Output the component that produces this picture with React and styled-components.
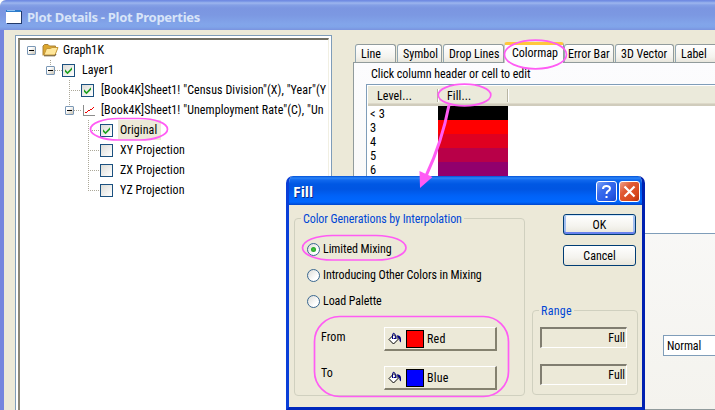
import React from "react";
import styled, { createGlobalStyle, css } from "styled-components";

const Global = createGlobalStyle`
  * { box-sizing: border-box; }
  html, body { margin: 0; padding: 0; overflow: hidden; }
  body {
    font-family: Roboto, sans-serif; font-stretch: condensed;
    font-size: 12px; line-height: 14px; letter-spacing: -0.08px; color: #000;
  }
  svg { flex: none; }
`;

const Screen = styled.div`
  position: relative; width: 715px; height: 410px; overflow: hidden; background: #fff;
`;
const Window = styled.div`
  display: flex; flex-direction: column; height: 410px; isolation: isolate;
  background: #ece9d8; border-top-left-radius: 6px; overflow: hidden;
`;
const TitleBar = styled.header`
  display: flex; flex: none; align-items: center; gap: 5px; height: 30px; padding: 3px 0 0 6px;
  background: linear-gradient(#7087e0 0, #7290e4 1px, #9db6ee 3px, #84a0e6 5px, #7b96e1 8px, #7c98e2 15px, #82a5ea 24px, #80a4e9 27px, #7a93df 30px);
`;
const Title = styled.h1`
  margin: 0; font: bold 13px/16px "Noto Sans", sans-serif; letter-spacing: -0.28px;
  white-space: pre; color: #d8e4f8;
`;
const Body = styled.div`
  display: flex; flex: 1; min-height: 0; padding-left: 11px;
  border-left: 4px solid #7585de;
`;
const TreePane = styled.section`
  flex: none; width: 317px; height: 390px; margin-top: 5px; padding: 2px;
  border: 1px solid #7f9db9; background: #fff;
`;
const Tree = styled.div`
  height: 100%; overflow: hidden; background: #fff; position: relative;
  border: solid; border-width: 2px 1px 0 2px; border-color: #716f64 #f1efe2 #fff #8a877a;
`;
const TreeRow = styled.div`
  display: flex; align-items: center; height: 20px; white-space: nowrap;
  padding-left: ${(p) => p.$indent}px;
`;
const TreeLabel = styled.span`
  margin-left: ${(p) => p.$gap ?? 5}px; padding: 0 ${(p) => (p.$selected ? 4 : 2)}px 0 2px;
  line-height: 20px; letter-spacing: 0.08px;
  background: ${(p) => (p.$selected ? "#ece9d8" : "transparent")};
`;
const Expander = styled.span`
  display: grid; place-items: center; flex: none; width: 9px; height: 9px;
  border: 1px solid #7b98b6; border-radius: 1px;
  background: linear-gradient(135deg, #fff 30%, #c8c2b2);
  &::after { content: ""; width: 5px; height: 1px; background: #000; }
`;
const Dots = styled.span`
  flex: none; width: ${(p) => p.$w}px; height: 1px;
  background: repeating-linear-gradient(90deg, #aca899 0 1px, transparent 1px 2px);
`;
const Spacer = styled.span`
  flex: none; width: 6px;
`;
const Branches = styled.svg`
  position: absolute; inset: 0; pointer-events: none;
`;
const Box = styled.span`
  display: grid; place-items: center; flex: none; width: 13px; height: 13px;
  border: 1px solid #1c5180; background: linear-gradient(135deg, #dcdcd7, #fff);
`;
const TabArea = styled.section`
  display: flex; flex-direction: column; width: 400px; flex: none; margin: 12px 0 0 21px;
`;
const Tabs = styled.nav`
  display: flex; align-items: flex-end; height: 20px; padding-left: 2px; flex: none; z-index: 1;
`;
const Tab = styled.button`
  flex: none; width: ${(p) => p.$w}px; height: 18px; margin: 0 ${(p) => p.$gap ?? 2}px 0 0;
  padding: 1px 0 0 ${(p) => p.$pad ?? 5}px; text-align: left; white-space: nowrap;
  font: inherit; font-stretch: condensed; letter-spacing: 0; color: #000;
  border: 1px solid #919b9c; border-left-color: #91a7b4; border-bottom: 0;
  border-radius: 3px 3px 0 0; background: linear-gradient(#fff, #f4f3ee 70%, #e8e6dc);
  ${(p) => p.$active && css`
    height: 21px; margin-bottom: -1px; padding-top: 0; padding-bottom: 3px; background: #fcfcfe;
    border-top: 3px solid #ffc73c; border-left-color: #c9cbc6;
  `}
`;
const Page = styled.div`
  flex: 1; padding: 4px 0 0 12px; border: 1px solid #919b9c;
  background: linear-gradient(#fcfcfe, #f4f3ee);
`;
const Hint = styled.p`
  margin: 0 0 3px 5px; height: 14px; letter-spacing: -0.04px;
`;
const List = styled.div`
  height: 150px; border: 1px solid #7f9db9; background: #fff; padding: 1px;
`;
const ListHead = styled.div`
  display: flex; height: 20px; padding-top: 3px; background: #ebeadb;
  border-bottom: 2px solid #d0ccbc; box-shadow: inset 0 -1px #ddd9c9;
`;
const HeadCell = styled.div`
  width: ${(p) => p.$w}px; height: 13px; padding-left: 9px; letter-spacing: 0.1px;
  border-right: 1px solid #b8b5a3; box-shadow: 1px 0 #fff;
`;
const Level = styled.div`
  display: flex; height: 14px; padding-left: 2px;
`;
const LevelName = styled.span`
  width: 68px; line-height: 15px; font-size: 12.5px; letter-spacing: 0.2px;
`;
const Swatch = styled.span`
  width: 70px; height: 14px; background: ${(p) => p.$color};
`;
const Combo = styled.div`
  width: 100px; height: 21px; margin: 101px 0 0 297px; padding: 3px 3px;
  border: 1px solid #7f9db9; background: #fff;
`;

const Dialog = styled.section`
  position: absolute; left: 286px; top: 176px; width: 359px; height: 234px;
  display: flex; flex-direction: column; overflow: hidden;
  border: solid #0a3fd8; border-width: 0 3px 3px; border-right-color: #0020b0; border-bottom-color: #0028bc;
  border-radius: 7px 7px 0 0; background: #ece9d8;
`;
const DialogBar = styled.header`
  display: flex; align-items: center; height: 29px; flex: none; gap: 2px; padding: 0 2px 0 4px;
  background: linear-gradient(#0050d8 0, #2b84f6 2px, #1068ee 4px, #0058e4 8px, #0055e2 13px, #0062f8 20px, #0068ff 26px, #0046cc 29px);
`;
const DialogTitle = styled.h2`
  flex: 1; margin: 2px 0 0; font: bold 14px/17px "Noto Sans", sans-serif; letter-spacing: 0;
  color: #fff; text-shadow: 1px 1px #0a2a8a;
`;
const CaptionButton = styled.button`
  display: grid; place-items: center; width: 21px; height: 21px; padding: 0; margin-top: 1px;
  border: 1px solid #fff; border-radius: 3px; color: #fff;
  background: ${(p) => p.$close
    ? "linear-gradient(135deg, #f0a088, #e05a34 35%, #d8481c 75%, #b8300c)"
    : "linear-gradient(135deg, #7ea4f8, #3a6cec 35%, #2a5ce8 70%, #1a44c8)"};
`;
const DialogBody = styled.div`
  display: flex; flex: 1; padding: 6px 5px 0;
`;
const GroupBox = styled.div`
  display: flow-root; width: ${(p) => p.$w}px; height: ${(p) => p.$h}px; flex: none;
  margin-top: ${(p) => p.$top ?? 0}px;
`;
const GroupFrame = styled.div`
  height: calc(100% - 7px); margin-top: 7px; padding: ${(p) => p.$pad};
  border: 1px solid #d0d0bf; border-radius: 4px;
`;
const GroupTitle = styled.div`
  width: max-content; height: 14px; margin: -7px 0 ${(p) => p.$after}px ${(p) => p.$x ?? 6}px; padding: 0 2px;
  background: #ece9d8; color: #0046d5; letter-spacing: ${(p) => p.$ls ?? -0.08}px;
`;
const Radio = styled.label`
  display: flex; align-items: center; gap: 3px; height: 26px; margin-left: 12px;
  white-space: nowrap;
`;
const RadioDot = styled.span`
  display: grid; place-items: center; width: 13px; height: 13px; flex: none;
  border: 1px solid #3a6890; border-radius: 50%;
  background: linear-gradient(135deg, #dcdcd7, #fff 70%);
  &::after {
    content: ""; width: 5px; height: 5px; border-radius: 50%;
    background: ${(p) => (p.$on ? "radial-gradient(#40c840, #189018)" : "transparent")};
  }
`;
const ColorRow = styled.div`
  display: flex; height: 24px; margin: ${(p) => p.$top}px 0 0 26px;
`;
const ColorName = styled.span`
  width: 63px; padding-top: ${(p) => p.$top}px; letter-spacing: 0.1px;
`;
const ColorButton = styled.button`
  display: flex; align-items: center; width: 113px; height: 24px; padding: 0 0 0 3px;
  font: inherit; font-stretch: condensed; letter-spacing: 0.2px; color: #000; background: #ece9d8;
  border: solid; border-width: 1px 2px 2px 1px; border-color: #fff #84816f #84816f #fff;
`;
const Chip = styled.span`
  width: 18px; height: 18px; margin: 0 3px 0 4px; flex: none;
  border: 1px solid #000; background: ${(p) => p.$color};
`;
const Side = styled.div`
  display: flex; flex-direction: column; width: 107px; margin-left: 7px; padding-top: 3px;
`;
const PushButton = styled.button`
  width: 73px; height: 21px; margin: 0 0 10px 31px; padding: 0; font: inherit; font-stretch: condensed;
  flex: none; color: #000; border: 1px solid #003c74; border-radius: 3px;
  background: linear-gradient(#fff, #f4f3ee 60%, #e8e5da);
  ${(p) => p.$default && css`
    box-shadow: inset 0 1px #cee7ff, inset 0 -2px #6982ee, inset 2px 0 #a3bff0, inset -2px 0 #a3bff0;
  `}
`;
const Field = styled.div`
  width: 87px; height: 21px; margin-bottom: 16px; padding: 2px 1px 0; text-align: right;
  border: solid; border-width: 2px 1px 1px 2px; border-color: #807d70 #fff #fff #807d70;
`;
const Marks = styled.svg`
  position: absolute; inset: 0; pointer-events: none;
`;

const Tick = () => (
  <svg width="9" height="9" viewBox="0 0 9 9">
    <path d="M1 3.2L3.5 6L8 1.3V3.8L3.5 8.3L1 5.8Z" fill="#21a121" />
  </svg>
);
const Check = ({ on }) => <Box>{on && <Tick />}</Box>;
const Folder = () => (
  <svg width="17" height="14" viewBox="0 0 17 14">
    <path d="M1 12.5V3L2.5 1.5H6L7.5 3H13.5V6" fill="#dda72e" stroke="#a88238" />
    <path d="M2 12L4.5 5.5H8.5L10 4.5H16L13 12Z" fill="#ffe79b" stroke="#c49738" />
    <path d="M2 12.8H13L14 11" fill="none" stroke="#66502a" />
  </svg>
);
const Plot = () => (
  <svg width="13" height="13" viewBox="0 0 13 13" shapeRendering="crispEdges">
    <path d="M1.5 1V11.5H13" fill="none" stroke="#8c8c8c" />
    <path d="M3 8.5H5M5 7.5H6M6 6.5H8M8 5.5H10M10 4.5H11M11 3.5H12" stroke="#f00000" />
  </svg>
);
const AppIcon = () => (
  <svg width="16" height="14" viewBox="0 0 16 14" shapeRendering="crispEdges">
    <path d="M0 0H15V13H0Z" fill="#fff" />
    <path d="M0 0H15V2H0Z" fill="#2e7ccc" />
    <path d="M1 0H9V1H1Z" fill="#8cc0f4" />
    <path d="M15.5 1V13M1 13.5H16" stroke="#223a6a" fill="none" />
  </svg>
);
const Bucket = () => (
  <svg width="14" height="14" viewBox="0 0 14 14">
    <path d="M1 7.5L6 2.5L10.5 7L5.5 12Z" fill="#fff" stroke="#000" />
    <path d="M4.5 7V2.5Q5 1 6 1.2Q7.5 1.5 7.5 6.5" fill="none" stroke="#000080" />
    <path d="M5.5 6.5H8.5" stroke="#000080" />
    <path d="M8.5 3.2Q13 3.5 13 7V10.5L11.5 9V7.5L9.5 5Z" fill="#000080" />
  </svg>
);

const levels = [["< 3", "#000"], ["3", "#f00"], ["4", "#df0020"], ["5", "#b80048"], ["6", "#91006d"]];

export default function App() {
  return (
    <Screen>
      <Global />
      <Window>
        <TitleBar><AppIcon /><Title>Plot Details - Plot Properties</Title></TitleBar>
        <Body>
          <TreePane>
            <Tree>
              <Branches width="307" height="200" shapeRendering="crispEdges">
                <g stroke="#aca899" strokeDasharray="1 1">
                  <path d="M30.5 20V26M49.5 40V66M68.5 80V151" />
                </g>
              </Branches>
              <TreeRow $indent={7}><Expander /><Spacer /><Folder /><TreeLabel $gap={2}>Graph1K</TreeLabel></TreeRow>
              <TreeRow $indent={26}><Expander /><Dots $w={7} /><Check on /><TreeLabel>Layer1</TreeLabel></TreeRow>
              <TreeRow $indent={51}><Dots $w={10} /><Check on /><TreeLabel>[Book4K]Sheet1! "Census Division"(X), "Year"(Y</TreeLabel></TreeRow>
              <TreeRow $indent={45}><Expander /><Dots $w={8} /><Plot /><TreeLabel $gap={4}>[Book4K]Sheet1! "Unemployment Rate"(C), "Un</TreeLabel></TreeRow>
              <TreeRow $indent={70}><Dots $w={10} /><Check on /><TreeLabel $selected>Original</TreeLabel></TreeRow>
              <TreeRow $indent={70}><Dots $w={10} /><Check /><TreeLabel>XY Projection</TreeLabel></TreeRow>
              <TreeRow $indent={70}><Dots $w={10} /><Check /><TreeLabel>ZX Projection</TreeLabel></TreeRow>
              <TreeRow $indent={70}><Dots $w={10} /><Check /><TreeLabel>YZ Projection</TreeLabel></TreeRow>
            </Tree>
          </TreePane>
          <TabArea>
            <Tabs>
              <Tab $w={41} $gap={1}>Line</Tab>
              <Tab $w={45} $gap={1}>Symbol</Tab>
              <Tab $w={61} $gap={0}>Drop Lines</Tab>
              <Tab $w={60} $gap={0} $pad={7} $active>Colormap</Tab>
              <Tab $w={50} $gap={1} $pad={3}>Error Bar</Tab>
              <Tab $w={59} $gap={1}>3D Vector</Tab>
              <Tab $w={45}>Label</Tab>
            </Tabs>
            <Page>
              <Hint>Click column header or cell to edit</Hint>
              <List>
                <ListHead><HeadCell $w={70}>Level...</HeadCell><HeadCell $w={70}>Fill...</HeadCell></ListHead>
                {levels.map(([name, color]) => (
                  <Level key={name}><LevelName>{name}</LevelName><Swatch $color={color} /></Level>
                ))}
              </List>
              <Combo>Normal</Combo>
            </Page>
          </TabArea>
        </Body>
      </Window>

      <Dialog>
        <DialogBar>
          <DialogTitle>Fill</DialogTitle>
          <CaptionButton>
            <svg width="13" height="15" viewBox="0 0 13 15" fill="none" stroke="#fff" strokeWidth="2">
              <path d="M3 5Q3 2 6.5 2Q10 2 10 4.5Q10 6 8 7.2Q6.5 8.2 6.5 10M6.5 12V14" />
            </svg>
          </CaptionButton>
          <CaptionButton $close>
            <svg width="13" height="13" viewBox="0 0 13 13" stroke="#fff" strokeWidth="2.2">
              <path d="M1.5 1.5L11.5 11.5M11.5 1.5L1.5 11.5" />
            </svg>
          </CaptionButton>
        </DialogBar>
        <DialogBody>
          <GroupBox $w={231} $h={185}>
            <GroupFrame $pad="0">
              <GroupTitle $after={10}>Color Generations by Interpolation</GroupTitle>
              <Radio><RadioDot $on />Limited Mixing</Radio>
              <Radio><RadioDot />Introducing Other Colors in Mixing</Radio>
              <Radio><RadioDot />Load Palette</Radio>
              <ColorRow $top={13}>
                <ColorName $top={3}>From</ColorName>
                <ColorButton><Bucket /><Chip $color="#f00" />Red</ColorButton>
              </ColorRow>
              <ColorRow $top={15}>
                <ColorName $top={0}>To</ColorName>
                <ColorButton><Bucket /><Chip $color="#00f" />Blue</ColorButton>
              </ColorRow>
            </GroupFrame>
          </GroupBox>
          <Side>
            <PushButton $default>OK</PushButton>
            <PushButton>Cancel</PushButton>
            <GroupBox $w={106} $h={92} $top={27}>
              <GroupFrame $pad="0 0 0 7px">
                <GroupTitle $x={-1} $ls={0.3} $after={9}>Range</GroupTitle>
                <Field>Full</Field>
                <Field>Full</Field>
              </GroupFrame>
            </GroupBox>
          </Side>
        </DialogBody>
      </Dialog>

      <Marks width="715" height="410" fill="none" stroke="#ff5cf4" strokeWidth="1.7">
        <rect x="90.5" y="118.5" width="77" height="21.5" rx="28" ry="10.7" />
        <ellipse cx="535.5" cy="54.5" rx="31" ry="14.3" />
        <ellipse cx="464.5" cy="95" rx="26.3" ry="10.8" />
        <rect x="302.5" y="235.5" width="103.5" height="24.5" rx="30" ry="12.2" />
        <rect x="314.5" y="316.5" width="194" height="80" rx="25" />
        <path d="M449 105Q442 142 426 176" strokeWidth="3" />
        <path d="M419.5 171L432.5 177L420 188Z" fill="#ff5cf4" stroke="none" />
      </Marks>
    </Screen>
  );
}
